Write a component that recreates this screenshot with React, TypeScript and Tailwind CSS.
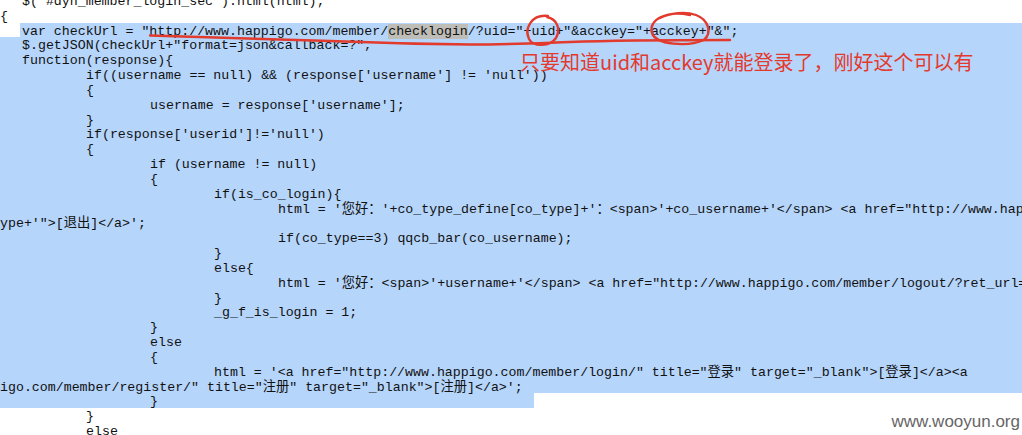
import React from "react";

// one row of the code listing
type Row = {
    pad: number;
    text: string;
    sel?: "none" | "full" | "start" | "end";
};

const rows: Row[] = [
    { pad: 22, text: '$("#dyn_member_login_sec").html(html);' },
    { pad: 0, text: "{" },
    { pad: 22, sel: "start", text: "" },
    { pad: 22, sel: "full", text: '$.getJSON(checkUrl+"format=json&callback=?",' },
    { pad: 22, sel: "full", text: "function(response){" },
    { pad: 86, sel: "full", text: "if((username == null) && (response['username'] != 'null'))" },
    { pad: 86, sel: "full", text: "{" },
    { pad: 150, sel: "full", text: "username = response['username'];" },
    { pad: 86, sel: "full", text: "}" },
    { pad: 86, sel: "full", text: "if(response['userid']!='null')" },
    { pad: 86, sel: "full", text: "{" },
    { pad: 150, sel: "full", text: "if (username != null)" },
    { pad: 150, sel: "full", text: "{" },
    { pad: 214, sel: "full", text: "if(is_co_login){" },
    {
        pad: 278,
        sel: "full",
        text: "html = '您好：'+co_type_define[co_type]+'：<span>'+co_username+'</span> <a href=\"http://www.happigo.com/member/logout/?ret_url='+ret_url+'&co_type='+co_type+'\">[退出]</a>';",
    },
    { pad: 0, sel: "full", text: "ype+'\">[退出]</a>';" },
    { pad: 278, sel: "full", text: "if(co_type==3) qqcb_bar(co_username);" },
    { pad: 214, sel: "full", text: "}" },
    { pad: 214, sel: "full", text: "else{" },
    {
        pad: 278,
        sel: "full",
        text: "html = '您好：<span>'+username+'</span> <a href=\"http://www.happigo.com/member/logout/?ret_url='+ret_url+'\">[退出]</a>';",
    },
    { pad: 214, sel: "full", text: "}" },
    { pad: 214, sel: "full", text: "_g_f_is_login = 1;" },
    { pad: 150, sel: "full", text: "}" },
    { pad: 150, sel: "full", text: "else" },
    { pad: 150, sel: "full", text: "{" },
    {
        pad: 214,
        sel: "full",
        text: "html = '<a href=\"http://www.happigo.com/member/login/\" title=\"登录\" target=\"_blank\">[登录]</a><a",
    },
    { pad: 0, sel: "full", text: "igo.com/member/register/\" title=\"注册\" target=\"_blank\">[注册]</a>';" },
    { pad: 150, sel: "end", text: "}" },
    { pad: 86, text: "}" },
    { pad: 86, text: "else" },
];

const CodeRow: React.FC<{ row: Row }> = ({ row }) => {
    const base = "box-border h-[14.84px] pt-[2px] leading-[14.84px] whitespace-pre";

    if (row.sel === "start") {
        // selection starts right before "var"
        return (
            <div className={`${base} ml-[20px] pl-[2px] bg-[#b5d5fb]`}>
                {'var checkUrl = "http://www.happigo.com/member/'}
                <span className="bg-[#bebdb7]">checklogin</span>
                {'/?uid="+uid+"&acckey="+acckey+"&";'}
            </div>
        );
    }

    if (row.sel === "end") {
        return (
            <div className={`${base} w-[534px] bg-[#b5d5fb]`} style={{ paddingLeft: row.pad }}>
                {row.text}
            </div>
        );
    }

    return (
        <div
            className={`${base} ${row.sel === "full" ? "bg-[#b5d5fb]" : ""}`}
            style={{ paddingLeft: row.pad }}
        >
            {row.text}
        </div>
    );
};

export default function App() {
    return (
        <div className="relative w-[1022px] h-[435px] overflow-hidden bg-white">
            {/* code listing */}
            <div className="mt-[-7px] text-[13.27px] text-[#111] font-['Liberation_Mono','Noto_Sans_CJK_SC',monospace]">
                {rows.map((row, i) => (
                    <CodeRow key={i} row={row} />
                ))}
            </div>

            {/* red pen marks */}
            <svg
                className="absolute inset-0 pointer-events-none"
                width="1022"
                height="435"
                viewBox="0 0 1022 435"
                fill="none"
                stroke="#e23a2c"
                strokeWidth="2.4"
                strokeLinecap="round"
                strokeLinejoin="round"
            >
                <path d="M150 35.5 C 200 36.5, 260 38.5, 330 41 C 380 43, 420 44, 470 44.5 C 510 44.5, 540 43, 570 42 C 620 40, 680 40, 730 40" />
                <path d="M548 16 C 532 14, 524 28, 529 39 C 533 47, 550 47, 556 38 C 561 29, 557 19, 547 17" />
                <path d="M690 15 C 666 10, 648 20, 652 33 C 656 45, 688 47, 704 40 C 712 33, 709 20, 696 15 C 685 11, 670 13, 660 18" />
            </svg>

            {/* annotation */}
            <div className="absolute left-[520px] top-[52px] leading-none text-[20px] text-[#e4392d] whitespace-nowrap font-['Noto_Sans_CJK_SC',sans-serif]">
                只要知道uid和acckey就能登录了，刚好这个可以有
            </div>

            {/* watermark */}
            <div className="absolute right-[2px] top-[413px] leading-none text-[17px] text-[#666] font-['Liberation_Sans',Arial,sans-serif]">
                www.wooyun.org
            </div>
        </div>
    );
}
